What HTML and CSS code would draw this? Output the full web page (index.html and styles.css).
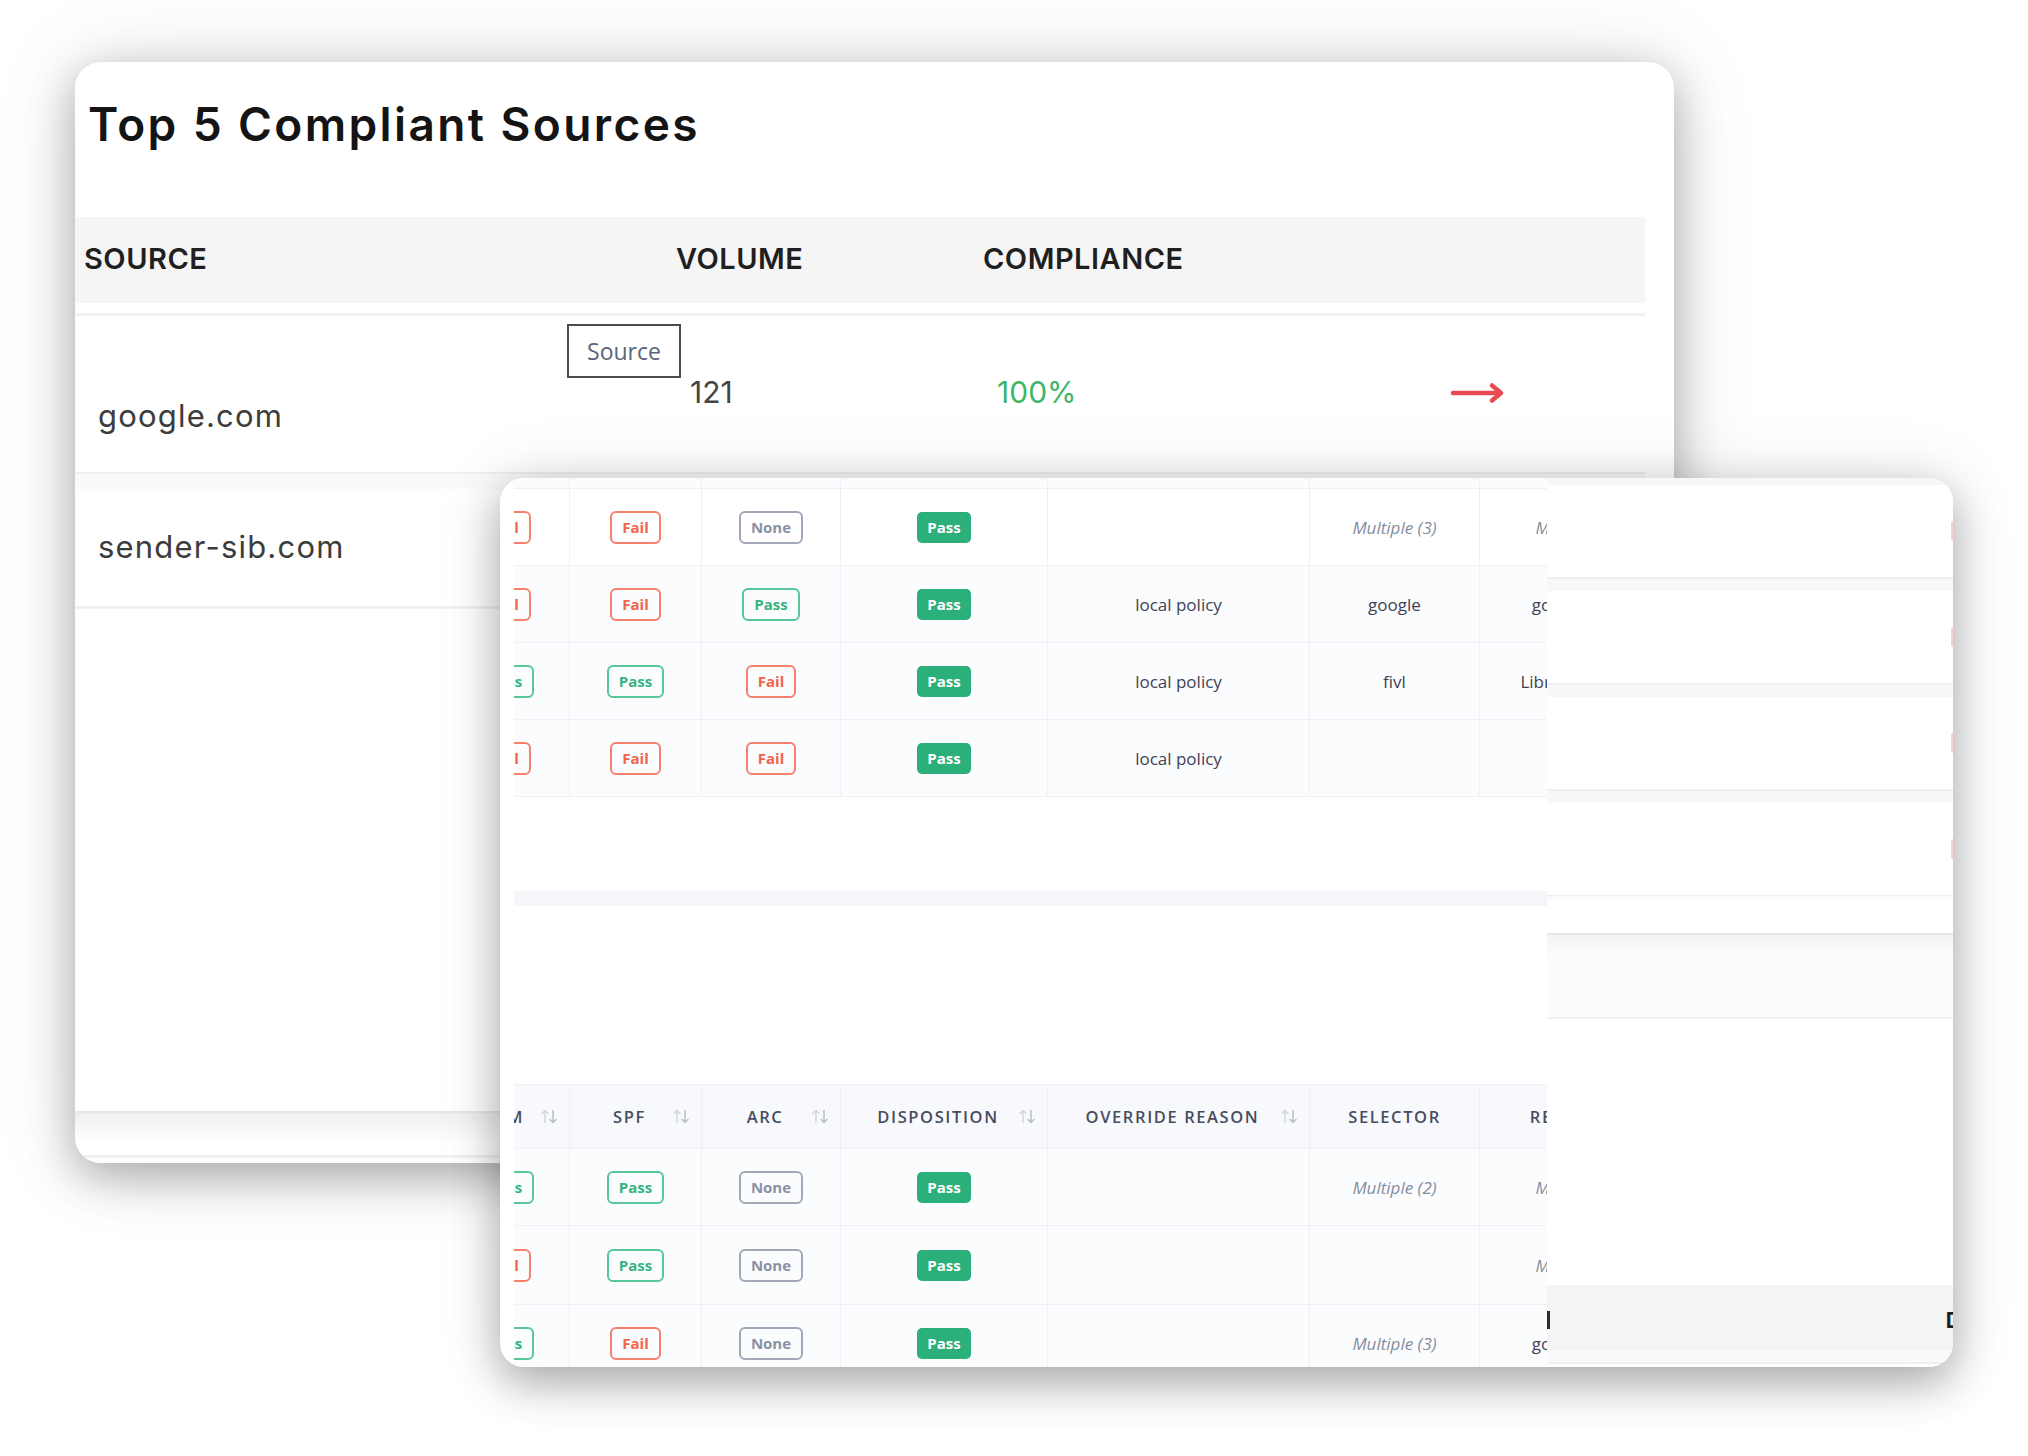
FILE: index.html
```html
<!DOCTYPE html>
<html lang="en">
<head>
<meta charset="utf-8">
<title>Top 5 Compliant Sources</title>
<link rel="stylesheet" href="styles.css">
</head>
<body>
<div class="stage">
  <section class="card back">
    <h1 class="title">Top 5 Compliant Sources</h1>
    <div class="src-head">
      <div class="hc">SOURCE</div>
      <div class="hc">VOLUME</div>
      <div class="hc">COMPLIANCE</div>
      <div></div>
    </div>
    <div class="src-line"></div>
    <div class="src-row r1">
      <div class="name n1">google.com</div>
      <div class="vol"><span class="tip">Source</span>121</div>
      <div class="pct">100%</div>
      <div class="go">
        <svg width="56" height="22" viewBox="0 0 56 22"><path d="M3 11 H50" stroke="#e94a51" stroke-width="4.5" stroke-linecap="round" fill="none"/><path d="M42 3.5 L51 11 L42 18.5" stroke="#e94a51" stroke-width="4.5" stroke-linecap="round" stroke-linejoin="round" fill="none"/></svg>
      </div>
    </div>
    <div class="src-sep"></div>
    <div class="src-row r2">
      <div class="name n2">sender-sib.com</div>
      <div></div><div></div><div></div>
    </div>
    <div class="src-line"></div>
    <div class="back-foot"></div>
  </section>

  <section class="card front">
    <div class="grid-wrap">
      <div class="grid-inner">
        <div class="trow stub"><div class="td"></div><div class="td"></div><div class="td"></div><div class="td"></div><div class="td"></div><div class="td"></div><div class="td"></div></div>
        <div class="trow plain">
          <div class="td"><span class="bd fail">Fail</span></div>
          <div class="td"><span class="bd fail">Fail</span></div>
          <div class="td"><span class="bd none">None</span></div>
          <div class="td"><span class="bd solid">Pass</span></div>
          <div class="td"></div>
          <div class="td"><i class="multi">Multiple (3)</i></div>
          <div class="td"><i class="multi">Multiple (3)</i></div>
        </div>
        <div class="trow">
          <div class="td"><span class="bd fail">Fail</span></div>
          <div class="td"><span class="bd fail">Fail</span></div>
          <div class="td"><span class="bd pass">Pass</span></div>
          <div class="td"><span class="bd solid">Pass</span></div>
          <div class="td txt">local policy</div>
          <div class="td txt">google</div>
          <div class="td txt">google.com</div>
        </div>
        <div class="trow">
          <div class="td"><span class="bd pass">Pass</span></div>
          <div class="td"><span class="bd pass">Pass</span></div>
          <div class="td"><span class="bd fail">Fail</span></div>
          <div class="td"><span class="bd solid">Pass</span></div>
          <div class="td txt">local policy</div>
          <div class="td txt">fivl</div>
          <div class="td txt">Libraesva.com</div>
        </div>
        <div class="trow">
          <div class="td"><span class="bd fail">Fail</span></div>
          <div class="td"><span class="bd fail">Fail</span></div>
          <div class="td"><span class="bd fail">Fail</span></div>
          <div class="td"><span class="bd solid">Pass</span></div>
          <div class="td txt">local policy</div>
          <div class="td"></div>
          <div class="td"></div>
        </div>
        <div class="gap1"></div>
        <div class="hscroll"></div>
        <div class="gap2"></div>
        <div class="trow thead">
          <div class="th"><span class="lbl">DKIM</span><svg class="sort" width="16" height="15" viewBox="0 0 16 15"><path d="M4 13.5V1.5M1 4.5L4 1.5L7 4.5" stroke="#d2d5dc" stroke-width="1.5" fill="none" stroke-linecap="round" stroke-linejoin="round"/><path d="M12 1.5V13.5M9 10.5L12 13.5L15 10.5" stroke="#b9bdc7" stroke-width="1.5" fill="none" stroke-linecap="round" stroke-linejoin="round"/></svg></div>
          <div class="th"><span class="lbl">SPF</span><svg class="sort" width="16" height="15" viewBox="0 0 16 15"><path d="M4 13.5V1.5M1 4.5L4 1.5L7 4.5" stroke="#d2d5dc" stroke-width="1.5" fill="none" stroke-linecap="round" stroke-linejoin="round"/><path d="M12 1.5V13.5M9 10.5L12 13.5L15 10.5" stroke="#b9bdc7" stroke-width="1.5" fill="none" stroke-linecap="round" stroke-linejoin="round"/></svg></div>
          <div class="th"><span class="lbl">ARC</span><svg class="sort" width="16" height="15" viewBox="0 0 16 15"><path d="M4 13.5V1.5M1 4.5L4 1.5L7 4.5" stroke="#d2d5dc" stroke-width="1.5" fill="none" stroke-linecap="round" stroke-linejoin="round"/><path d="M12 1.5V13.5M9 10.5L12 13.5L15 10.5" stroke="#b9bdc7" stroke-width="1.5" fill="none" stroke-linecap="round" stroke-linejoin="round"/></svg></div>
          <div class="th"><span class="lbl">DISPOSITION</span><svg class="sort" width="16" height="15" viewBox="0 0 16 15"><path d="M4 13.5V1.5M1 4.5L4 1.5L7 4.5" stroke="#d2d5dc" stroke-width="1.5" fill="none" stroke-linecap="round" stroke-linejoin="round"/><path d="M12 1.5V13.5M9 10.5L12 13.5L15 10.5" stroke="#b9bdc7" stroke-width="1.5" fill="none" stroke-linecap="round" stroke-linejoin="round"/></svg></div>
          <div class="th"><span class="lbl">OVERRIDE REASON</span><svg class="sort" width="16" height="15" viewBox="0 0 16 15"><path d="M4 13.5V1.5M1 4.5L4 1.5L7 4.5" stroke="#d2d5dc" stroke-width="1.5" fill="none" stroke-linecap="round" stroke-linejoin="round"/><path d="M12 1.5V13.5M9 10.5L12 13.5L15 10.5" stroke="#b9bdc7" stroke-width="1.5" fill="none" stroke-linecap="round" stroke-linejoin="round"/></svg></div>
          <div class="th center"><span class="lbl">SELECTOR</span></div>
          <div class="th center"><span class="lbl">REPORTER</span></div>
        </div>
        <div class="trow">
          <div class="td"><span class="bd pass">Pass</span></div>
          <div class="td"><span class="bd pass">Pass</span></div>
          <div class="td"><span class="bd none">None</span></div>
          <div class="td"><span class="bd solid">Pass</span></div>
          <div class="td"></div>
          <div class="td"><i class="multi">Multiple (2)</i></div>
          <div class="td"><i class="multi">Multiple (2)</i></div>
        </div>
        <div class="trow tall">
          <div class="td"><span class="bd fail">Fail</span></div>
          <div class="td"><span class="bd pass">Pass</span></div>
          <div class="td"><span class="bd none">None</span></div>
          <div class="td"><span class="bd solid">Pass</span></div>
          <div class="td"></div>
          <div class="td"></div>
          <div class="td"><i class="multi">Multiple (2)</i></div>
        </div>
        <div class="trow">
          <div class="td"><span class="bd pass">Pass</span></div>
          <div class="td"><span class="bd fail">Fail</span></div>
          <div class="td"><span class="bd none">None</span></div>
          <div class="td"><span class="bd solid">Pass</span></div>
          <div class="td"></div>
          <div class="td"><i class="multi">Multiple (3)</i></div>
          <div class="td txt">google.com</div>
        </div>
      </div>
    </div>

    <div class="side">
      <div class="s-top"></div>
      <div class="s-row"><span class="sliver"></span></div>
      <div class="s-sep"></div>
      <div class="s-row"><span class="sliver"></span></div>
      <div class="s-sep"></div>
      <div class="s-row"><span class="sliver"></span></div>
      <div class="s-sep"></div>
      <div class="s-row"><span class="sliver"></span></div>
      <div class="s-sep thin"></div>
      <div class="s-blank"></div>
      <div class="s-foot"></div>
      <div class="s-white"></div>
      <div class="s-band"><span class="bar"></span><span class="dch">D</span></div>
      <div class="s-light"></div>
    </div>
  </section>
</div>
</body>
</html>
```

FILE: styles.css
```css
* { box-sizing: border-box; }
html, body { margin: 0; padding: 0; background: #ffffff; }
body { width: 2028px; height: 1456px; overflow: hidden; font-family: "Inter", "Liberation Sans", sans-serif; }

.stage { position: relative; width: 2028px; height: 1456px; padding-top: 62px; padding-left: 75px; }

.card { background: #ffffff; border-radius: 26px; overflow: hidden; }

/* ---------- back card ---------- */
.back {
  width: 1599px; height: 1101px;
  display: flex; flex-direction: column;
  box-shadow: 0 14px 46px rgba(0,0,0,0.30), 0 0 90px rgba(0,0,0,0.10);
}
.title {
  margin: 0; height: 155px; padding: 39px 0 0 13px;
  font-family: "Inter", "Liberation Sans", sans-serif;
  font-weight: 600; font-size: 46px; line-height: 46px; letter-spacing: 2.4px; color: #141414;
  flex: none;
}
.src-head, .src-row {
  display: grid; grid-template-columns: 592px 307px 476px 1fr;
  margin-right: 29px; flex: none;
}
.src-head { height: 86px; background: #f5f5f5; align-items: center; padding-bottom: 3px; }
.hc { padding-left: 9px; font-weight: 600; font-size: 29px; line-height: 29px; letter-spacing: 0.5px; color: #1f1f1f; }
.src-line { height: 3px; background: #f1f1f1; margin: 10px 29px 0 0; flex: none; }
.src-row + .src-line { margin-top: 0; }
.src-row.r1 { height: 156px; }
.src-row.r2 { height: 117px; }
.src-sep { height: 17px; margin-right: 29px; background: #fafafa; border-top: 2px solid #efefef; flex: none; }

.name { padding-left: 23px; font-size: 31px; line-height: 31px; letter-spacing: 1.2px; color: #3c3c3c; }
.n1 { padding-top: 84px; }
.n2 { padding-top: 42px; }
.vol { position: relative; padding: 61px 0 0 23px; font-size: 30px; line-height: 30px; color: #454545; }
.pct { padding: 61px 0 0 23px; font-size: 30px; line-height: 30px; color: #3fb56a; }
.go { padding: 66px 0 0 0; }
.go svg { display: block; }
.tip {
  position: absolute; left: -100px; top: 8px;
  width: 114px; height: 54px; border: 2px solid #4b4b4b; background: #fff;
  display: flex; align-items: center; justify-content: center;
  font-family: "Open Sans", "Liberation Sans", sans-serif; font-size: 23px; color: #5a6479;
}
.back-foot {
  margin-top: auto; margin-right: 29px; height: 52px; flex: none;
  border-top: 2px solid #e7e7e7;
  background: linear-gradient(#f0f0f0, #ffffff 60%, #ffffff);
}
.back-foot::after { content: ""; display: block; height: 3px; margin-top: 42px; background: #f2f2f2; }

/* ---------- front card ---------- */
.front {
  position: absolute; left: 500px; top: 478px;
  width: 1453px; height: 889px; border-radius: 24px;
  display: flex; padding-left: 14px;
  box-shadow: 0 16px 44px rgba(0,0,0,0.30), 0 0 70px rgba(0,0,0,0.10);
  font-family: "Open Sans", "Liberation Sans", sans-serif;
}
.grid-wrap { width: 1033px; flex: none; overflow: hidden; }
.grid-inner { width: 1234px; margin-left: -72px; }
.trow {
  display: grid; grid-template-columns: 128px 132px 139px 207px 262px 170px 196px;
  height: 77px; border-bottom: 1px solid #eef0f5; background: #fbfcfe;
}
.trow.plain { background: #ffffff; }
.trow.stub { height: 11px; background: #fbfcfe; }
.trow.tall { height: 79px; }
.td, .th { border-right: 1px solid #eef0f5; display: flex; align-items: center; justify-content: center; }
.td.txt { font-size: 17px; color: #3f4254; }
.multi { font-style: italic; font-size: 17px; color: #868ca0; }

.thead { height: 65px; background: #f8f9fc; border-top: 1px solid #eef0f5; }
.th { padding: 0 12px 0 16px; }
.th .lbl { flex: 1; text-align: center; font-weight: 600; font-size: 16.5px; letter-spacing: 1.6px; color: #474d5e; white-space: nowrap; }
.th.center { padding: 0; }
.sort { flex: none; display: block; }

.gap1 { height: 94px; background: #fff; }
.hscroll { height: 15px; background: #f5f6f9; }
.gap2 { height: 178px; background: #fff; }

.bd {
  display: inline-flex; align-items: center; justify-content: center;
  height: 33px; padding: 0 10px; border: 2px solid; border-radius: 6px;
  font-weight: 700; font-size: 15px; line-height: 1;
}
.bd.fail { border-color: #f6806c; color: #f2634c; }
.bd.none { border-color: #a3a8b9; color: #8b90a3; }
.bd.pass { border-color: #58c798; color: #38b37e; }
.bd.solid { height: 31px; border: none; background: #2cb07b; color: #ffffff; border-radius: 5px; }

/* side layer */
.side { width: 406px; flex: none; display: flex; flex-direction: column; background: #fff; font-family: "Inter", "Liberation Sans", sans-serif; }
.s-top { height: 7px; background: #f7f7f7; flex: none; }
.s-row { height: 92px; flex: none; display: flex; align-items: center; justify-content: flex-end; }
.sliver { width: 2px; height: 20px; border-radius: 2px 0 0 2px; background: #f9cfcd; }
.s-sep { height: 14px; flex: none; border-top: 2px solid #eeeeee; background: #f8f8f8; }
.s-sep.thin { height: 5px; border-top: 1px solid #f0f0f0; background: #fafafa; }
.s-blank { height: 33px; flex: none; }
.s-foot { height: 86px; flex: none; border-top: 2px solid #e9e9e9; border-bottom: 2px solid #f0f0f0; background: linear-gradient(#f3f3f3, #fbfbfb 25%, #fcfcfc); }
.s-white { height: 266px; flex: none; }
.s-band { height: 65px; flex: none; background: #f4f4f4; display: flex; align-items: center; justify-content: space-between; }
.bar { width: 3px; height: 18px; background: #2d2d2d; margin-top: 5px; }
.dch { font-weight: 700; font-size: 21px; color: #1e1e1e; margin-right: -8px; margin-top: 5px; }
.s-light { height: 14px; flex: none; background: #fafafa; border-bottom: 2px solid #f0f0f0; }
```
